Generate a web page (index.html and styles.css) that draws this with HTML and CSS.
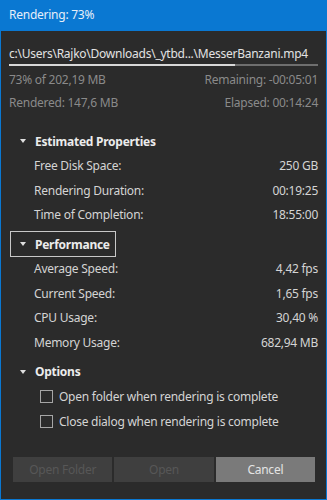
FILE: index.html
```html
<!DOCTYPE html>
<html lang="en">
<head>
  <meta charset="UTF-8" />
  <title>Rendering: 73%</title>
  <link rel="stylesheet" href="styles.css">
</head>
<body>
  <div class="window">
    <div class="titlebar">Rendering: 73%</div>
    <div class="content">
      <div class="path">c:\Users\Rajko\Downloads\_ytbd...\MesserBanzani.mp4</div>
      <div class="progress"><div class="progress-fill" style="width: 73%;"></div></div>
      <div class="stat"><span>73% of 202,19 MB</span><span>Remaining: -00:05:01</span></div>
      <div class="stat"><span>Rendered: 147,6 MB</span><span>Elapsed: 00:14:24</span></div>

      <div class="section first">
        <div class="section-head"><span class="arrow"></span>Estimated Properties</div>
        <div class="row"><span>Free Disk Space:</span><span>250 GB</span></div>
        <div class="row"><span>Rendering Duration:</span><span>00:19:25</span></div>
        <div class="row"><span>Time of Completion:</span><span>18:55:00</span></div>
      </div>

      <div class="section">
        <div class="section-head focused"><span class="arrow"></span>Performance</div>
        <div class="row"><span>Average Speed:</span><span>4,42 fps</span></div>
        <div class="row"><span>Current Speed:</span><span>1,65 fps</span></div>
        <div class="row"><span>CPU Usage:</span><span>30,40 %</span></div>
        <div class="row"><span>Memory Usage:</span><span>682,94 MB</span></div>
      </div>

      <div class="section">
        <div class="section-head"><span class="arrow"></span>Options</div>
        <label class="check"><span class="box"></span>Open folder when rendering is complete</label>
        <label class="check"><span class="box"></span>Close dialog when rendering is complete</label>
      </div>

      <div class="buttons">
        <button disabled>Open Folder</button>
        <button disabled>Open</button>
        <button class="cancel">Cancel</button>
      </div>
    </div>
  </div>
</body>
</html>
```

FILE: styles.css
```css
* {
  box-sizing: border-box;
}
body {
  margin: 0;
  background: #2b2b2b;
  font-family: 'Noto Sans', 'Open Sans', sans-serif;
  font-size: 12px;
  letter-spacing: -0.25px;
  color: #d4d4d4;
}
.window {
  width: 327px;
  height: 500px;
  border: 1px solid #0a78d2;
  border-top: none;
  display: flex;
  flex-direction: column;
}
.titlebar {
  height: 31px;
  background: #0a78d2;
  color: #e6eef8;
  line-height: 30px;
  margin: 0 -1px;
  padding-left: 9px;
}
.content {
  flex: 1;
  display: flex;
  flex-direction: column;
  padding: 0 8px 17px;
}
.path {
  margin-top: 14px;
  line-height: 18px;
  color: #e2e2e2;
  white-space: nowrap;
}
.progress {
  margin-top: 1px;
  height: 2px;
  background: #6e6e6e;
}
.progress-fill {
  height: 100%;
  background: #d8d8d8;
}
.stat {
  display: flex;
  justify-content: space-between;
  color: #8a8a8a;
  height: 23px;
  line-height: 23px;
  margin-top: 2px;
}
.stat + .stat {
  margin-top: 0;
}
.section {
  margin-top: 3.5px;
}
.section.first {
  margin-top: 14px;
}
.section-head {
  display: flex;
  align-items: center;
  height: 26px;
  font-weight: bold;
  color: #ececec;
  padding-left: 9px;
  padding-right: 5px;
  border: 1px solid transparent;
  width: fit-content;
  margin-left: 1px;
}
.section-head.focused {
  border-color: #c8c8c8;
}
.arrow {
  width: 0;
  height: 0;
  border-left: 3.5px solid transparent;
  border-right: 3.5px solid transparent;
  border-top: 4px solid #e0e0e0;
  margin-right: 9px;
}
.row {
  display: flex;
  justify-content: space-between;
  height: 24.5px;
  line-height: 24.5px;
  padding-left: 25px;
}
.check {
  display: flex;
  align-items: center;
  height: 24.5px;
  padding-left: 31px;
}
.box {
  width: 13px;
  height: 13px;
  border: 1px solid #a6a6a6;
  margin-right: 6px;
}
.buttons {
  margin: auto 3px 0 4px;
  display: grid;
  grid-template-columns: repeat(3, 1fr);
  gap: 2px;
}
button {
  height: 25px;
  border: none;
  font-family: inherit;
  font-size: 12px;
  letter-spacing: inherit;
  background: #3f3f3f;
  color: #575757;
}
.cancel {
  background: #7a7a7a;
  color: #e4e4e4;
}
```
